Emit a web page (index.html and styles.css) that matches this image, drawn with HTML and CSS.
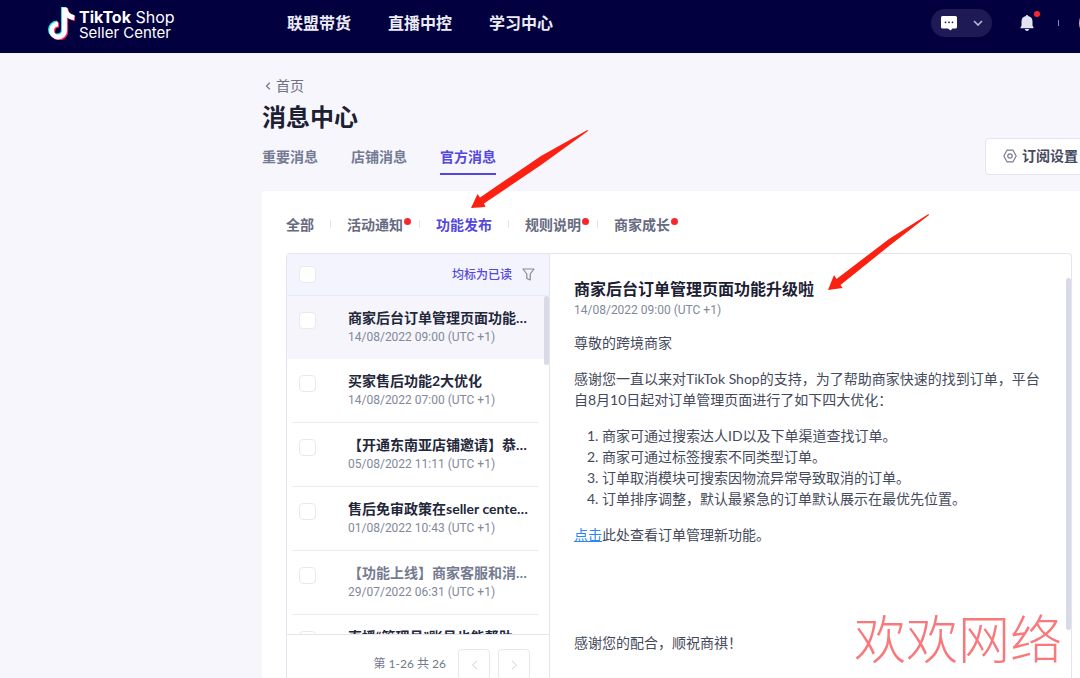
FILE: index.html
```html
<!DOCTYPE html>
<html lang="zh-CN">
<head>
<meta charset="utf-8">
<title>消息中心 - TikTok Shop Seller Center</title>
<link rel="stylesheet" href="styles.css">
</head>
<body>
<header class="topbar">
  <a class="logo" href="#">
    <svg class="logo-mark" width="29" height="34" viewBox="0 0 29 34" aria-hidden="true">
      <g fill="none" stroke-width="5">
        <path stroke="#25e5e0" d="M15.500 1V23.500A6.500 6.500 0 1 1 9 17M15.500 2C16.500 7 20 10.500 25 11"/>
        <path stroke="#fe2858" d="M17.700 2V25.500A6.500 6.500 0 1 1 11.200 19M17.700 3C18.500 8 22 12 27 12.500"/>
        <path stroke="#fff" d="M16.600 1.500V24.500A6.500 6.500 0 1 1 10.100 18M16.600 2C17.600 7 21 11 26.300 11.700"/>
      </g>
    </svg>
    <span class="logo-text"><span class="brand"><b>TikTok</b> Shop</span><span>Seller Center</span></span>
  </a>
  <nav class="main-nav">
    <a href="#">联盟带货</a>
    <a href="#">直播中控</a>
    <a href="#">学习中心</a>
  </nav>
  <div class="top-actions">
    <button class="chat" type="button" aria-label="聊天">
      <svg width="16" height="15" viewBox="0 0 16 15"><path fill="#fff" d="M1.500 0H14.500A1.500 1.500 0 0 1 16 1.500V11A1.500 1.500 0 0 1 14.500 12.500H11.500L9.500 14.500L7 12.500H1.500A1.500 1.500 0 0 1 0 11V1.500A1.500 1.500 0 0 1 1.500 0Z"/><g fill="#1d1a55"><circle cx="4.500" cy="6.300" r=".9"/><circle cx="8" cy="6.300" r=".9"/><circle cx="11.500" cy="6.300" r=".9"/></g></svg>
      <svg width="10" height="6" viewBox="0 0 10 6"><path d="M1 1L5 5L9 1" fill="none" stroke="#b9bad0" stroke-width="1.600"/></svg>
    </button>
    <button class="bell" type="button" aria-label="通知">
      <svg width="14" height="16" viewBox="0 0 14 16"><path fill="#e3e4f0" d="M7 0C7.700 0 8 .4 8 1C11 1.500 12.500 3.600 12.500 6.500V10.500L13.500 12.500V13.300H.5V12.500L1.500 10.500V6.500C1.500 3.600 3 1.500 6 1C6 .4 6.300 0 7 0ZM4.800 14H9.200C9 15.300 8 16 7 16S5 15.300 4.800 14Z"/></svg>
      <i class="bell-dot"></i>
    </button>
    <span class="top-divider"></span>
    <span class="avatar"></span>
  </div>
</header>

<main class="page">
  <a class="back" href="#"><svg width="6" height="8" viewBox="0 0 6 8"><path d="M4.800 .7L1.500 4L4.800 7.300" fill="none" stroke="#777c8f" stroke-width="1.300"/></svg>首页</a>
  <h1>消息中心</h1>
  <div class="tab-row">
    <nav class="tabs">
      <a href="#">重要消息</a>
      <a href="#">店铺消息</a>
      <a class="active" href="#">官方消息</a>
    </nav>
    <button class="subscribe" type="button">
      <svg width="14" height="14" viewBox="0 0 14 14" fill="none" stroke="#777b91" stroke-width="1.200"><path d="M4 1.200H10L13.200 7L10 12.800H4L.8 7Z" stroke-linejoin="round"/><circle cx="7" cy="7" r="2.200"/></svg>订阅设置
    </button>
  </div>

  <section class="card">
    <nav class="subtabs">
      <a href="#">全部</a><i class="sep"></i>
      <a class="unread" href="#">活动通知</a><i class="sep"></i>
      <a class="active" href="#">功能发布</a><i class="sep"></i>
      <a class="unread" href="#">规则说明</a><i class="sep"></i>
      <a class="unread" href="#">商家成长</a>
    </nav>
    <div class="panel">
      <div class="list-pane">
        <div class="list-head">
          <input type="checkbox" aria-label="全选">
          <button class="mark-read" type="button">均标为已读</button>
          <button class="filter" type="button" aria-label="筛选"><svg width="13" height="13" viewBox="0 0 13 13"><path d="M1 1H12L8.200 6V12L4.800 10.500V6Z" fill="none" stroke="#858999" stroke-width="1.200" stroke-linejoin="round"/></svg></button>
        </div>
        <ul class="messages">
          <li class="selected"><input type="checkbox" aria-label="选择消息 1"><a href="#"><strong>商家后台订单管理页面功能升级啦</strong><time>14/08/2022 09:00 (UTC +1)</time></a></li>
          <li><input type="checkbox" aria-label="选择消息 2"><a href="#"><strong>买家售后功能2大优化</strong><time>14/08/2022 07:00 (UTC +1)</time></a></li>
          <li><input type="checkbox" aria-label="选择消息 3"><a href="#"><strong>【开通东南亚店铺邀请】恭喜您</strong><time>05/08/2022 11:11 (UTC +1)</time></a></li>
          <li><input type="checkbox" aria-label="选择消息 4"><a href="#"><strong>售后免审政策在seller center上线</strong><time>01/08/2022 10:43 (UTC +1)</time></a></li>
          <li class="read"><input type="checkbox" aria-label="选择消息 5"><a href="#"><strong>【功能上线】商家客服和消息中心</strong><time>29/07/2022 06:31 (UTC +1)</time></a></li>
          <li><input type="checkbox" aria-label="选择消息 6"><a href="#"><strong>直播“管理员”账号也能帮助</strong></a></li>
        </ul>
        <i class="list-scroll"></i>
        <div class="pager">
          <span>第 1-26 共 26</span>
          <button type="button" aria-label="上一页"><svg width="7" height="10" viewBox="0 0 7 10"><path d="M6 1L1.500 5L6 9" fill="none" stroke="#d0d2da"/></svg></button>
          <button type="button" aria-label="下一页"><svg width="7" height="10" viewBox="0 0 7 10"><path d="M1 1L5.500 5L1 9" fill="none" stroke="#d0d2da"/></svg></button>
        </div>
      </div>
      <article class="detail">
        <h2>商家后台订单管理页面功能升级啦</h2>
        <time>14/08/2022 09:00 (UTC +1)</time>
        <div class="body-text">
          <p>尊敬的跨境商家</p>
          <p>感谢您一直以来对TikTok Shop的支持，为了帮助商家快速的找到订单，平台自8月10日起对订单管理页面进行了如下四大优化：</p>
          <ol>
            <li>商家可通过搜索达人ID以及下单渠道查找订单。</li>
            <li>商家可通过标签搜索不同类型订单。</li>
            <li>订单取消模块可搜索因物流异常导致取消的订单。</li>
            <li>订单排序调整，默认最紧急的订单默认展示在最优先位置。</li>
          </ol>
          <p><a href="#">点击</a>此处查看订单管理新功能。</p>
          <p><br></p>
          <p><br></p>
          <p>感谢您的配合，顺祝商祺！</p>
        </div>
        <i class="detail-scroll"></i>
      </article>
    </div>
  </section>
</main>

<svg class="arrow arrow-tab" width="118" height="80" viewBox="0 0 118 80" aria-hidden="true"><path fill="#fb2010" d="M116.500 0L70 26L9 67.500L6.500 64L0 78L14.500 77L13 73.500L70 35L117 1Z"/></svg>
<svg class="arrow arrow-title" width="104" height="78" viewBox="0 0 104 78" aria-hidden="true"><path fill="#fb2010" d="M101.500 0L62 25L9.500 65L7 61L1 76L15.500 74L13.500 71L62 32L102 1Z"/></svg>
<div class="watermark">欢欢网络</div>
</body>
</html>
```

FILE: styles.css
```css
* { box-sizing: border-box; }
body {
  margin: 0;
  height: 100vh;
  overflow: hidden;
  display: flex;
  flex-direction: column;
  background: #f6f6fc;
  color: #252a3d;
  font: 14px/21px Lato, "Noto Sans CJK SC", sans-serif;
}
a { color: inherit; text-decoration: none; }
button { margin: 0; padding: 0; border: 0; background: none; font: inherit; color: inherit; }
svg { display: block; flex: none; }
h1, h2, p, ol, ul { margin: 0; padding: 0; }

.topbar {
  flex: none;
  display: flex;
  align-items: center;
  height: 53px;
  padding: 0 0 7px 48px;
  background: #02003f;
  color: #fff;
}
.logo { display: flex; align-items: center; width: 239px; gap: 2px; }
.logo-text { display: flex; flex-direction: column; font: 15px/15px Inter, sans-serif; white-space: nowrap; padding-top: 3px; }
.logo-text .brand { font-size: 16px; line-height: 16px; }
.main-nav { display: flex; gap: 37px; padding-bottom: 2px; font-size: 16px; font-weight: 700; color: #ececf6; }
.top-actions { display: flex; align-items: center; margin: 0 -27px 0 auto; }
.chat { display: flex; align-items: center; gap: 16px; height: 28px; padding: 0 9px 0 10px; border-radius: 14px; background: #1d1a55; }
.bell { position: relative; margin-left: 28px; }
.bell-dot { position: absolute; top: -4px; right: -6px; width: 6px; height: 6px; border-radius: 50%; background: #fb2630; }
.top-divider { width: 1px; height: 6px; margin: 0 20px 0 24px; background: #8c8cae; }
.avatar { width: 28px; height: 28px; border-radius: 50%; background: #e8a0a8; }

.page { flex: 1; min-height: 0; display: flex; flex-direction: column; padding: 22px 0 0 262px; }
.back { display: flex; align-items: center; gap: 5px; padding-left: 3px; color: #6c7183; }
h1 { font-size: 24px; line-height: 41px; font-weight: 700; color: #1c2033; }
.tab-row { display: flex; justify-content: space-between; align-items: flex-start; height: 54px; }
.tabs { display: flex; gap: 33px; padding-top: 9px; color: #747a93; font-weight: 700; }
.tabs a { height: 29px; border-bottom: 2px solid transparent; }
.tabs .active { color: #5448dc; border-color: #5448dc; }
.subscribe {
  display: flex;
  align-items: center;
  gap: 5px;
  height: 37px;
  margin: 1px -22px 0 0;
  padding: 0 23px 2px 17px;
  border: 1px solid #e4e5ef;
  border-radius: 4px;
  background: #fff;
  color: #454a60;
  font-weight: 700;
}

.card { flex: 1; min-height: 0; display: flex; flex-direction: column; padding: 22px 8px 0 24px; background: #fff; border-radius: 3px 0 0 0; }
.subtabs { display: flex; align-items: center; gap: 16px; height: 22px; margin-bottom: 18px; color: #666b80; font-weight: 700; }
.subtabs a { position: relative; }
.subtabs .active { color: #5448dc; }
.subtabs .unread::after { content: ""; position: absolute; top: 4px; right: -8px; width: 7px; height: 7px; border-radius: 50%; background: #f9272c; }
.sep { width: 1px; height: 8px; background: #e6e7ef; }

.panel { flex: 1; min-height: 0; display: flex; border: 1px solid #e4e5f0; border-bottom: 0; border-radius: 4px 4px 0 0; }
.list-pane { position: relative; flex: none; display: flex; flex-direction: column; width: 263px; border-right: 1px solid #e4e5f0; }
.list-head { display: flex; align-items: center; height: 42px; padding: 0 14px 1px 12px; background: #f4f4fe; border-bottom: 1px solid #e9eaf5; }
input[type="checkbox"] { appearance: none; flex: none; width: 17px; height: 17px; margin: 0; border: 1px solid #e9eaef; border-radius: 4px; background: #fff; }
.mark-read { margin: 0 10px 0 auto; color: #5448dc; font-size: 12px; font-weight: 500; }

.messages { flex: 1; min-height: 0; overflow: hidden; list-style: none; }
.messages li { display: flex; align-items: flex-start; gap: 32px; height: 64px; margin: 0 10px 0 5px; padding: 11px 0 0 7px; border-bottom: 1px solid #ecedf2; }
.messages li input { margin-top: 5px; }
.messages .selected { height: 63px; margin: 0; padding-right: 9px; padding-left: 12px; background: #f5f5fb; border-color: #f5f5fb; }
.messages a { display: flex; flex-direction: column; min-width: 0; width: 184px; }
.messages strong { overflow: hidden; white-space: nowrap; text-overflow: ellipsis; color: #23273a; }
.messages .read strong { color: #747b91; }
time { font-family: Roboto, "Noto Sans CJK SC", sans-serif; font-size: 12px; line-height: 19px; color: #83889a; }
.list-scroll { position: absolute; top: 42px; right: 0; width: 5px; height: 69px; border-radius: 3px; background: #d8dae6; }
.pager { flex: none; display: flex; justify-content: flex-end; gap: 8px; height: 44px; padding: 14px 19px 0 0; border-top: 1px solid #e4e5f0; color: #747a8c; font-size: 12px; line-height: 30px; overflow: hidden; }
.pager span { margin-right: 4px; }
.pager button { display: flex; align-items: center; justify-content: center; width: 32px; height: 32px; border: 1px solid #e6e7ed; border-radius: 4px; }

.detail { position: relative; flex: 1; min-width: 0; padding: 23px 22px 0 24px; overflow: hidden; }
.detail h2 { font-size: 16px; line-height: 24px; color: #1c2033; }
.detail time { display: block; }
.body-text { display: flex; flex-direction: column; gap: 15px; margin-top: 12px; color: #454a5b; }
.body-text ol { padding-left: 28px; }
.body-text p a { color: #2c86f5; text-decoration: underline; }
.detail-scroll { position: absolute; top: 24px; right: 0; bottom: 48px; width: 5px; border-radius: 3px; background: #d8dae6; }

.arrow { position: absolute; pointer-events: none; }
.arrow-tab { left: 471px; top: 130px; }
.arrow-title { left: 827px; top: 214px; }
.watermark { position: absolute; right: 18px; bottom: 9px; color: #f8787b; font-size: 52px; line-height: 60px; font-weight: 300; }
```
